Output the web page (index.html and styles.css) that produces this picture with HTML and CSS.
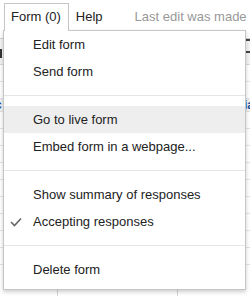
FILE: index.html
```html
<!DOCTYPE html>
<html lang="en">
<head>
    <meta charset="UTF-8">
    <title>Form menu</title>
    <link rel="stylesheet" href="styles.css">
</head>
<body>
    <div class="menubar">
        <div class="menu-tab open">Form (0)</div>
        <div class="menu-tab">Help</div>
        <div class="last-edit">Last edit was made</div>
    </div>

    <div class="toolbar">
        <span class="tool-mark left"></span>
        <span class="tool-lines"></span>
    </div>

    <div class="sheet">
        <div class="row"></div>
        <div class="row"></div>
        <div class="row header-row"><span class="cell-text">c</span><span class="cell-text right">ia</span></div>
        <div class="row"></div>
        <div class="row"></div>
        <div class="row"></div>
        <div class="row"></div>
        <div class="row"></div>
        <div class="row"></div>
        <div class="row"></div>
        <div class="row"></div>
        <div class="row"></div>
        <div class="row cols"></div>
    </div>

    <div class="dropdown">
        <div class="item">Edit form</div>
        <div class="item">Send form</div>
        <div class="separator"></div>
        <div class="item hover">Go to live form</div>
        <div class="item">Embed form in a webpage...</div>
        <div class="separator"></div>
        <div class="item">Show summary of responses</div>
        <div class="item checked">
            <svg class="check" width="12" height="10" viewBox="0 0 12 10">
                <polyline points="1,5 4.5,8.5 11,1.5" fill="none" stroke="#666" stroke-width="1.6"/>
            </svg>
            Accepting responses
        </div>
        <div class="separator"></div>
        <div class="item">Delete form</div>
    </div>
</body>
</html>
```

FILE: styles.css
```css
body {
    margin: 0;
    width: 250px;
    height: 296px;
    overflow: hidden;
    font-family: "Liberation Sans", Arial, sans-serif;
    font-size: 13px;
    color: #222;
    background: #fff;
    position: relative;
}

.menubar {
    display: flex;
    align-items: flex-end;
    height: 38px;
    border-bottom: 1px solid #d0d0d0;
    padding-left: 4px;
    box-sizing: content-box;
}

.menu-tab {
    height: 26px;
    line-height: 26px;
    padding: 0 7px 0 6px;
    margin-bottom: 8px;
    border: 1px solid transparent;
    border-bottom: none;
    white-space: nowrap;
}

.menu-tab.open {
    border-color: #c6c6c6;
    background: #fff;
    position: relative;
    z-index: 2;
    height: 27px;
    margin-bottom: 7px;
}

.last-edit {
    margin-left: 24px;
    margin-bottom: 8px;
    line-height: 26px;
    color: #999;
    white-space: nowrap;
}

.toolbar {
    height: 25px;
    background: #f3f3f3;
    border-bottom: 1px solid #dadada;
    display: flex;
    justify-content: space-between;
    align-items: center;
}

.tool-mark.left {
    width: 2px;
    height: 9px;
    background: #333;
    margin-top: 4px;
}

.tool-lines {
    width: 6px;
    height: 10px;
    border-top: 2px solid #444;
    border-bottom: 2px solid #444;
    margin-bottom: 12px;
}

.row {
    height: 16px;
    border-bottom: 1px solid #e2e2e2;
    display: flex;
    justify-content: space-between;
    align-items: center;
}

.header-row {
    background: #f1f1f1;
    height: 12px;
}

.cell-text {
    color: #1c4fa0;
    font-weight: bold;
    font-size: 12px;
    margin-left: -5px;
}

.cell-text.right {
    margin-left: 0;
    margin-right: -4px;
}

.row.cols {
    height: 40px;
    background:
        linear-gradient(#d6d6d6, #d6d6d6) 57px 0 / 1px 100% no-repeat,
        linear-gradient(#d6d6d6, #d6d6d6) 177px 0 / 1px 100% no-repeat;
}

.dropdown {
    position: absolute;
    left: 3px;
    top: 30px;
    width: 241px;
    background: #fff;
    border: 1px solid #c6c6c6;
    box-shadow: 0 2px 4px rgba(0, 0, 0, 0.2);
    padding: 0 0 6px;
    z-index: 1;
}

.item {
    position: relative;
    line-height: 17px;
    padding: 5px 0 5px 29px;
    white-space: nowrap;
}

.item.hover {
    background: #eeeeee;
}

.check {
    position: absolute;
    left: 6px;
    top: 9px;
}

.separator {
    height: 1px;
    background: #e5e5e5;
    margin: 10px 0;
}
```
